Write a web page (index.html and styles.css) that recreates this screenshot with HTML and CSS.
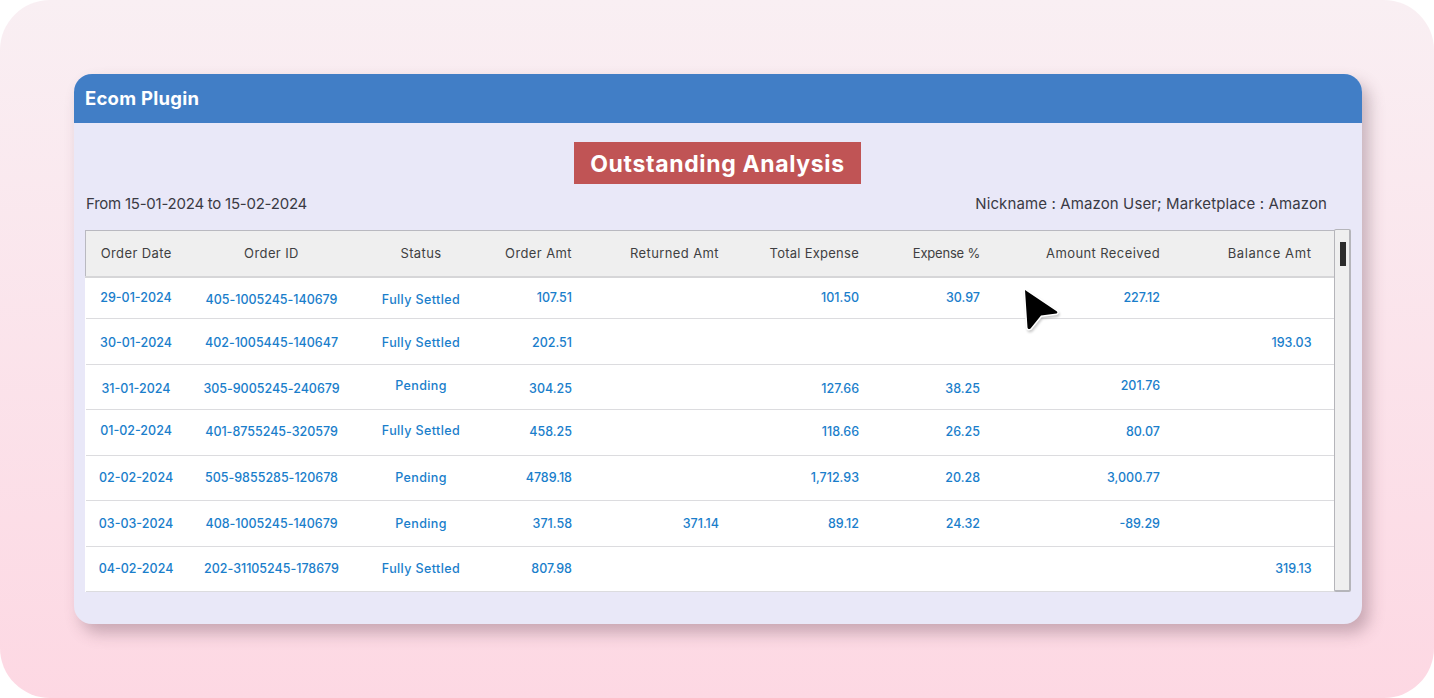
FILE: index.html
```html
<!DOCTYPE html>
<html lang="en">
<head>
<meta charset="utf-8">
<title>Ecom Plugin</title>
<link rel="stylesheet" href="styles.css">
</head>
<body>
<main class="stage">
  <section class="card">
    <header class="card-head">Ecom Plugin</header>
    <div class="card-body">
      <div class="title-row"><h1 class="title">Outstanding Analysis</h1></div>
      <div class="meta">
        <span class="range">From 15-01-2024 to 15-02-2024</span>
        <span>Nickname : Amazon User; Marketplace : Amazon</span>
      </div>
      <div class="grid-wrap">
        <table class="grid">
          <colgroup>
            <col class="c1"><col class="c2"><col class="c3"><col class="c4"><col class="c5"><col class="c6"><col class="c7"><col class="c8"><col class="c9">
          </colgroup>
          <thead>
            <tr><th class="mid">Order Date</th><th class="mid">Order ID</th><th class="mid">Status</th><th>Order Amt</th><th>Returned Amt</th><th class="tight">Total Expense</th><th class="tighter">Expense %</th><th>Amount Received</th><th class="last wide">Balance Amt</th></tr>
          </thead>
          <tbody>
            <tr class="r1"><td class="mid">29-01-2024</td><td class="mid dn id">405-1005245-140679</td><td class="mid dn st">Fully Settled</td><td>107.51</td><td></td><td>101.50</td><td>30.97</td><td>227.12</td><td class="last"></td></tr>
            <tr class="r2"><td class="mid">30-01-2024</td><td class="mid id">402-1005445-140647</td><td class="mid st">Fully Settled</td><td>202.51</td><td></td><td></td><td></td><td></td><td class="last">193.03</td></tr>
            <tr class="r3"><td class="mid">31-01-2024</td><td class="mid id">305-9005245-240679</td><td class="mid up st">Pending</td><td>304.25</td><td></td><td>127.66</td><td>38.25</td><td class="up">201.76</td><td class="last"></td></tr>
            <tr class="r4"><td class="mid up">01-02-2024</td><td class="mid id">401-8755245-320579</td><td class="mid up st">Fully Settled</td><td>458.25</td><td></td><td>118.66</td><td>26.25</td><td>80.07</td><td class="last"></td></tr>
            <tr class="r5"><td class="mid">02-02-2024</td><td class="mid id">505-9855285-120678</td><td class="mid st">Pending</td><td>4789.18</td><td></td><td>1,712.93</td><td>20.28</td><td>3,000.77</td><td class="last"></td></tr>
            <tr class="r6"><td class="mid">03-03-2024</td><td class="mid id">408-1005245-140679</td><td class="mid st">Pending</td><td>371.58</td><td>371.14</td><td>89.12</td><td>24.32</td><td>-89.29</td><td class="last"></td></tr>
            <tr class="r7"><td class="mid">04-02-2024</td><td class="mid id">202-31105245-178679</td><td class="mid st">Fully Settled</td><td>807.98</td><td></td><td></td><td></td><td></td><td class="last">319.13</td></tr>
          </tbody>
        </table>
        <div class="scroll"><span class="thumb"></span></div>
      </div>
    </div>
    <svg class="cursor" width="40" height="46" viewBox="0 0 40 46" aria-hidden="true">
      <path class="cursor-shape" d="M2 1 L34 22.500 Q35 24 33.500 24.500 L18 26.500 L7.500 39.500 Q5 41 4.500 38.500 Z"/>
    </svg>
  </section>
</main>
</body>
</html>
```
FILE: styles.css
```css
* { box-sizing: border-box; }
html, body { margin: 0; padding: 0; background: #fff; }
body { width: 1434px; height: 698px; overflow: hidden; font-family: Inter, "Liberation Sans", sans-serif; }

.stage {
  width: 1434px;
  height: 698px;
  padding: 74px 72px 74px 74px;
  border-radius: 50px;
  background: linear-gradient(180deg, #f9eff3 0%, #fdd8e3 100%);
}

.card {
  position: relative;
  height: 550px;
  border-radius: 18px;
  background: #e9e8f8;
  box-shadow: 7px 9px 16px rgba(90, 60, 75, 0.32);
}

.card-head {
  height: 49px;
  padding: 0 11px 2px;
  display: flex;
  align-items: center;
  border-radius: 18px 18px 0 0;
  background: #417ec6;
  color: #fff;
  font-size: 18.500px;
  font-weight: 700;
  letter-spacing: 0.25px;
}

.card-body { padding: 19px 10px 0 11px; }

.title-row { display: flex; justify-content: center; padding-right: 2px; }

.title {
  margin: 0;
  width: 287px;
  height: 42px;
  padding-top: 1px;
  display: flex;
  align-items: center;
  justify-content: center;
  background: #c05455;
  color: #fff;
  font-size: 23px;
  font-weight: 700;
  letter-spacing: 0.65px;
}

.meta {
  display: flex;
  justify-content: space-between;
  margin: 8px 25px 0 1px;
  height: 22px;
  align-items: center;
  color: #3a3a44;
  font-size: 15px;
  letter-spacing: 0.12px;
}

.range { letter-spacing: -0.24px; }

.grid-wrap { display: flex; align-items: flex-start; margin-top: 16px; }

.grid {
  width: 1249px;
  table-layout: fixed;
  border-collapse: collapse;
  background: #fff;
  font-size: 12.500px;
}

.c1 { width: 102px; } .c2 { width: 169px; } .c3 { width: 130px; }
.c4 { width: 101px; } .c5 { width: 147px; } .c6 { width: 140px; }
.c7 { width: 121px; } .c8 { width: 180px; } .c9 { width: 159px; }

.grid th, .grid td { padding: 0 15.500px 0 0; text-align: right; white-space: nowrap; }
.grid th.mid, .grid td.mid { padding: 0 1px 0 0; text-align: center; }
.grid th.last, .grid td.last { padding-right: 23px; }

.grid thead tr { height: 46px; background: #efefef; border: 1px solid #b9b9c0; border-bottom: 2px solid #d6d6d8; border-right: 0; }
.grid th { color: #3f3f42; font-weight: 400; font-size: 13px; letter-spacing: 0.4px; }
.grid th.tight { letter-spacing: 0.25px; }
.grid th.tighter { letter-spacing: -0.2px; }
.grid th.wide { letter-spacing: 0.6px; }

.grid tbody tr { border-bottom: 1px solid #dcdcdf; }
.grid td { color: #1a7ecb; font-weight: 500; }
.grid td.id { letter-spacing: -0.02px; }
.grid td.st { letter-spacing: 0.4px; }

.grid tr.r2 td, .grid tr.r3 td { padding-top: 2px; }
.grid tr.r4 td, .grid tr.r5 td, .grid tr.r7 td { padding-bottom: 2px; }
.grid tr td.dn { padding-top: 4px; }
.grid tr td.up { padding-top: 0; padding-bottom: 4px; }
.grid tr.r3 td.up { padding-bottom: 4px; }

.r1 { height: 42px; } .r2 { height: 46px; } .r3 { height: 45px; } .r4 { height: 46px; }
.r5 { height: 45px; } .r6 { height: 46px; } .r7 { height: 45px; }

.scroll {
  width: 17px;
  height: 363px;
  margin: -1px 0 0 -1px;
  padding: 12px 0 0 5px;
  background: #efefef;
  border: 1px solid #b5b5ba;
  border-width: 1px 2px 2px 1px;
  border-radius: 2px;
}

.thumb { display: block; width: 6px; height: 24px; background: #2b2b2b; }

.cursor { position: absolute; left: 949px; top: 215px; filter: drop-shadow(1px 2px 1px rgba(0, 0, 0, 0.2)); }
.cursor-shape { fill: #000; stroke: #fff; stroke-width: 3; stroke-linejoin: round; paint-order: stroke; }
```
